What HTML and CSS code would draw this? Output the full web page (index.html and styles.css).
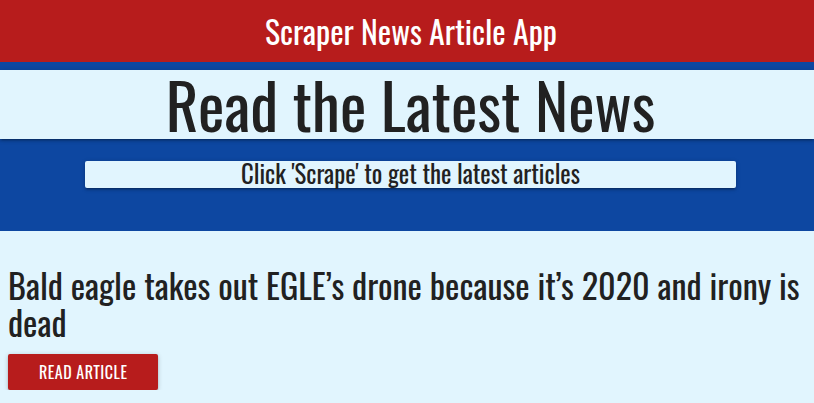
FILE: index.html
```html
<!DOCTYPE html>
<html lang="en">
<head>
<meta charset="utf-8">
<title>Scraper News Article App</title>
<link rel="stylesheet" href="styles.css">
</head>
<body>
<nav class="nav">
  <div class="brand">Scraper News Article App</div>
</nav>
<header class="hero">
  <div class="hero-band">
    <h1 class="hero-title">Read the Latest News</h1>
  </div>
  <div class="hero-actions">
    <div class="scrape-panel">
      <h5 class="scrape-text">Click 'Scrape' to get the latest articles</h5>
    </div>
  </div>
</header>
<main class="articles">
  <article class="article">
    <h4 class="article-title">Bald eagle takes out EGLE’s drone because it’s 2020 and irony is dead</h4>
    <a class="btn" href="#">Read Article</a>
  </article>
</main>
</body>
</html>
```
FILE: styles.css
```css
html, body {
  margin: 0;
  padding: 0;
}
body {
  background: #e1f5fe;
  font-family: "Oswald", "Liberation Sans", sans-serif;
  color: #212121;
}
.nav {
  background: #b71c1c;
  height: 62px;
  border-bottom: 8px solid #0d47a1;
  display: flex;
  justify-content: center;
  padding-left: 8px;
}
.brand {
  color: #fff;
  font-size: 31.8px;
  line-height: 61px;
  font-weight: 400;
}
.hero {
  background: #0d47a1;
}
.hero-band {
  background: #e1f5fe;
  height: 69px;
  position: relative;
  box-shadow: 0 2px 2px 0 rgba(0,0,0,0.14), 0 3px 1px -2px rgba(0,0,0,0.12), 0 1px 5px 0 rgba(0,0,0,0.2);
}
.hero-title {
  margin: 0;
  padding-left: 7px;
  text-align: center;
  font-size: 63px;
  font-weight: 400;
  line-height: 67px;
}
.hero-actions {
  padding: 22px 78px 43px 85px;
}
.scrape-panel {
  background: #e1f5fe;
  height: 27px;
  border-radius: 2px;
  box-shadow: 0 2px 2px 0 rgba(0,0,0,0.14), 0 3px 1px -2px rgba(0,0,0,0.12), 0 1px 5px 0 rgba(0,0,0,0.2);
}
.scrape-text {
  margin: 0;
  text-align: center;
  font-size: 24.7px;
  font-weight: 400;
  line-height: 24px;
}
.articles {
  padding: 35px 8px 0;
}
.article-title {
  margin: 0 0 14px;
  font-size: 34.2px;
  font-weight: 400;
  line-height: 37px;
}
.btn {
  display: inline-block;
  background: #b71c1c;
  color: #fff;
  text-decoration: none;
  text-transform: uppercase;
  font-size: 16px;
  letter-spacing: 0.5px;
  height: 36px;
  line-height: 36px;
  padding: 0 31px;
  border-radius: 2px;
  box-shadow: 0 2px 2px 0 rgba(0,0,0,0.14), 0 3px 1px -2px rgba(0,0,0,0.12), 0 1px 5px 0 rgba(0,0,0,0.2);
}
```
